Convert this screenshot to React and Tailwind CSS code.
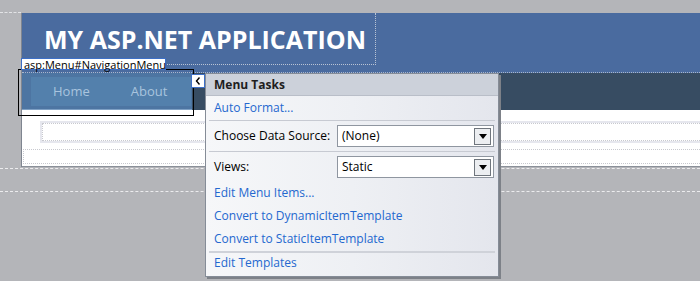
import React from "react";

function Select({ value }) {
  return (
    <div className="w-[157px] h-[22px] border border-[#8f96a0] bg-white flex items-center p-[2px]">
      <span className="flex-1 pl-[2px] text-[12px] text-black leading-none">{value}</span>
      <div className="w-[17px] h-[17px] border border-[#6f757d] bg-[#eceef1] flex items-center justify-center">
        <svg width="8" height="5" viewBox="0 0 8 5"><path d="M0 0H8L4 5Z" fill="#000" /></svg>
      </div>
    </div>
  );
}

function Link({ children }) {
  return <div className="text-[12px] text-[#2468cf] leading-none">{children}</div>;
}

export default function App() {
  return (
    <div
      className="w-[700px] h-[281px] bg-[#b4b5b9] relative overflow-hidden"
      style={{ fontFamily: '"Open Sans", "Liberation Sans", sans-serif' }}
    >
      <div className="h-[13px]">
        <div className="w-[21px] h-[13px] border-b border-dashed border-[#e2e3e6]" />
      </div>
      <div className="ml-[21px] border-l border-[#7f8590]">
        {/* header */}
        <div className="h-[60px] bg-[#4a6b9f] border-b border-dotted border-[#a9b6cc] relative">
          <div className="w-[354px] h-[52px] border-r border-b border-dotted border-[#b9c3d4] pl-[22px] pt-[14px]">
            <div className="text-white font-bold text-[25px] leading-none whitespace-nowrap">MY ASP.NET APPLICATION</div>
          </div>
        </div>
        {/* nav */}
        <div className="h-[37px] bg-[#374c62] flex">
          <div className="w-[170px] h-[37px] bg-[#4d75a2] border-b border-[#7ea0c4] pl-[9px] pt-[4px]">
            <div className="w-[160px] h-[29px] bg-[#5380ac] flex items-center text-[13px] text-[#a9c4de]">
              <span className="ml-[22px]">Home</span>
              <span className="ml-[41px]">About</span>
            </div>
          </div>
        </div>
        {/* content */}
        <div className="h-[57px] bg-white border-b border-[#8a9099] pt-[11px]">
          <div className="ml-[18px] h-[22px] border-2 border-[#e6e7ee] border-r-0">
            <div className="h-full border border-dotted border-[#c8c9cf] border-r-0" />
          </div>
          <div className="ml-[1px] mt-[6px] h-[15px] border border-dotted border-[#c8c9cf] border-r-0" />
        </div>
      </div>
      <div className="mt-[1px] border-t border-dashed border-[#ececee]" />
      <div className="mt-[22px] border-t border-dashed border-[#ececee]" />

      {/* selection overlay */}
      <div className="absolute left-[18px] top-[69px] w-[176px] h-[47px] border border-black" />
      <div className="absolute left-[21px] top-[58px] w-[145px] h-[12px] bg-white border border-[#3d6fc6] flex items-center pl-[2px] text-[11px] leading-none text-black whitespace-nowrap">
        asp:Menu#NavigationMenu
      </div>
      <div className="absolute left-[191px] top-[74px] w-[14px] h-[14px] bg-white border border-[#3d6fc6] flex items-center justify-center">
        <svg width="6" height="8" viewBox="0 0 6 8"><path d="M4.5 0.5L1.5 4L4.5 7.5" stroke="#000" strokeWidth="1.4" fill="none" /></svg>
      </div>

      {/* smart tag panel */}
      <div className="absolute left-[205px] top-[73px] w-[294px] h-[204px] border border-[#858c97] shadow-[2px_2px_0_#7d8188] bg-gradient-to-r from-[#f6f7f9] via-[#eef0f4] to-[#e4e6ed] flex flex-col">
        <div className="h-[22px] bg-[#ccd1da] border-b border-[#b9bec8] flex items-center pl-[8px] text-[12px] font-bold text-[#1e1e1e]">
          Menu Tasks
        </div>
        <div className="px-[8px] h-[24px] flex items-center"><Link>Auto Format...</Link></div>
        <div className="mx-[3px] border-t border-[#c7cad2]" />
        <div className="h-[30px] flex items-center justify-between pl-[8px] pr-[4px]">
          <span className="text-[12px] text-black leading-none">Choose Data Source:</span>
          <Select value="(None)" />
        </div>
        <div className="mx-[3px] border-t border-[#c7cad2]" />
        <div className="h-[30px] flex items-center justify-between pl-[8px] pr-[4px]">
          <span className="text-[12px] text-black leading-none">Views:</span>
          <Select value="Static" />
        </div>
        <div className="pl-[8px] flex flex-col">
          <div className="h-[22px] flex items-center"><Link>Edit Menu Items...</Link></div>
          <div className="h-[23px] flex items-center"><Link>Convert to DynamicItemTemplate</Link></div>
          <div className="h-[23px] flex items-center"><Link>Convert to StaticItemTemplate</Link></div>
        </div>
        <div className="mx-[3px] mt-[1px] border-t-2 border-[#cfd2d9]" />
        <div className="pl-[8px] h-[19px] flex items-center"><Link>Edit Templates</Link></div>
      </div>
    </div>
  );
}
